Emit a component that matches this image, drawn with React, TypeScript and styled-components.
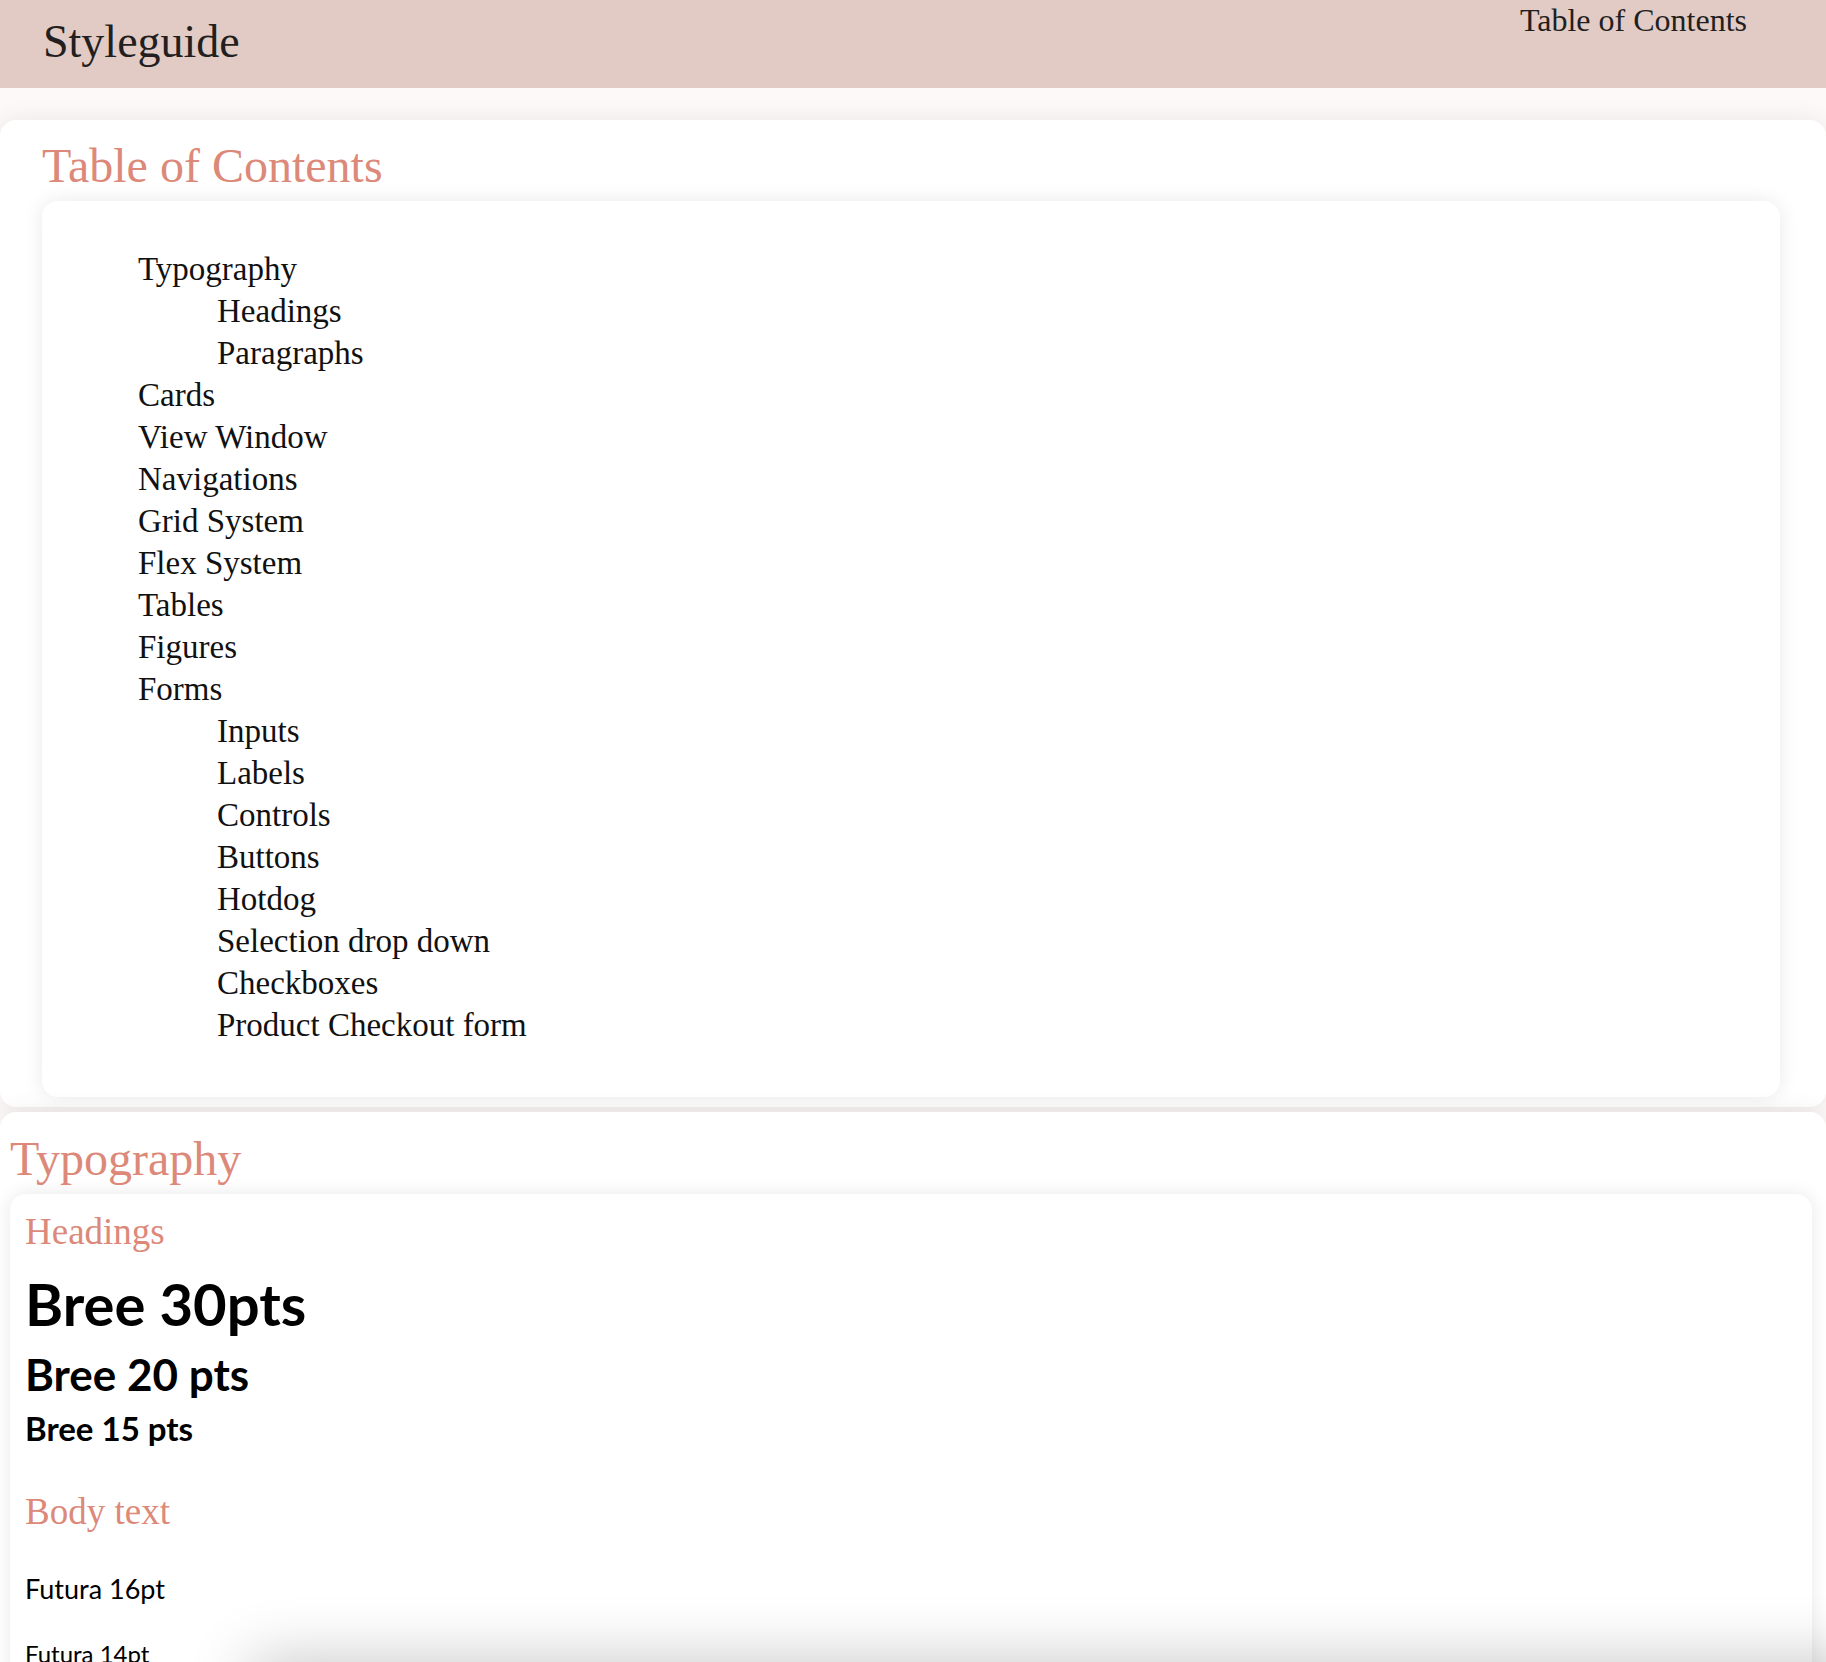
import React from 'react';
import styled, { createGlobalStyle } from 'styled-components';

const GlobalStyle = createGlobalStyle`
  html, body {
    margin: 0;
    padding: 0;
  }
  body {
    background: #fdf9f8;
    font-family: "Liberation Serif", "Times New Roman", serif;
    color: #111;
  }
  * {
    box-sizing: border-box;
  }
`;

const Header = styled.header`
  height: 88px;
  background: #e2cbc5;
  display: flex;
  justify-content: space-between;
  align-items: flex-start;
  padding: 0 79px 0 43px;
`;

const Brand = styled.h1`
  margin: 15px 0 0;
  font-size: 46px;
  font-weight: 400;
  line-height: normal;
  color: #231f20;
`;

const HeaderLink = styled.a`
  margin-top: 2px;
  font-size: 32px;
  line-height: normal;
  color: #231f20;
  text-decoration: none;
`;

const Main = styled.main`
  padding-top: 32px;
  display: flex;
  flex-direction: column;
  gap: 5px;
`;

const Section = styled.section<{ $inset: number; $top: number }>`
  background: #fff;
  border-radius: 16px;
  box-shadow: 0 0 24px rgba(0, 0, 0, 0.08);
  padding: ${(p) => p.$top}px ${(p) => p.$inset + 4}px 10px ${(p) => p.$inset}px;
`;

const SectionTitle = styled.h2`
  margin: 0 0 8px;
  font-size: 48px;
  font-weight: 400;
  line-height: normal;
  color: #dc897a;
`;

const Panel = styled.div<{ $pad: string }>`
  background: #fff;
  border-radius: 16px;
  box-shadow: 0 0 20px rgba(0, 0, 0, 0.09);
  padding: ${(p) => p.$pad};
`;

const TocList = styled.ul<{ $nested?: boolean }>`
  list-style: none;
  margin: 0;
  padding: 0 0 0 ${(p) => (p.$nested ? 79 : 0)}px;
`;

const TocItem = styled.li`
  font-size: 33px;
  line-height: 42px;
`;

const TocLink = styled.a`
  color: #111;
  text-decoration: none;
`;

const SubHeading = styled.h3<{ $gap: number }>`
  margin: ${(p) => p.$gap}px 0 0;
  font-size: 37px;
  font-weight: 400;
  line-height: normal;
  color: #dc897a;
`;

const BreeSample = styled.p<{ $size: number; $gap: number }>`
  margin: ${(p) => p.$gap}px 0 0;
  font-family: Lato, "Open Sans", sans-serif;
  font-weight: 700;
  font-size: ${(p) => p.$size}px;
  line-height: normal;
  color: #000;
`;

const FuturaSample = styled.p<{ $size: number; $gap: number }>`
  margin: ${(p) => p.$gap}px 0 0;
  font-family: Lato, "Open Sans", sans-serif;
  font-weight: 400;
  font-size: ${(p) => p.$size}px;
  line-height: normal;
  color: #000;
`;

const BottomShade = styled.div`
  position: fixed;
  left: 250px;
  right: -80px;
  bottom: -60px;
  height: 60px;
  box-shadow: 0 0 64px rgba(0, 0, 0, 0.24);
  pointer-events: none;
`;

type TocEntry = { label: string; children?: string[] };

const toc: TocEntry[] = [
  { label: 'Typography', children: ['Headings', 'Paragraphs'] },
  { label: 'Cards' },
  { label: 'View Window' },
  { label: 'Navigations' },
  { label: 'Grid System' },
  { label: 'Flex System' },
  { label: 'Tables' },
  { label: 'Figures' },
  {
    label: 'Forms',
    children: [
      'Inputs',
      'Labels',
      'Controls',
      'Buttons',
      'Hotdog',
      'Selection drop down',
      'Checkboxes',
      'Product Checkout form',
    ],
  },
];

const App: React.FC = () => {
  return (
    <>
      <GlobalStyle />
      <Header>
        <Brand>Styleguide</Brand>
        <HeaderLink href="#toc">Table of Contents</HeaderLink>
      </Header>

      <Main>
        <Section id="toc" $inset={42} $top={18}>
          <SectionTitle>Table of Contents</SectionTitle>
          <Panel $pad="47px 0 51px 96px">
            <TocList>
              {toc.map((entry) => (
                <TocItem key={entry.label}>
                  <TocLink href="#">{entry.label}</TocLink>
                  {entry.children && (
                    <TocList $nested>
                      {entry.children.map((child) => (
                        <TocItem key={child}>
                          <TocLink href="#">{child}</TocLink>
                        </TocItem>
                      ))}
                    </TocList>
                  )}
                </TocItem>
              ))}
            </TocList>
          </Panel>
        </Section>

        <Section $inset={10} $top={19}>
          <SectionTitle>Typography</SectionTitle>
          <Panel $pad="16px 15px 40px">
            <SubHeading $gap={0}>Headings</SubHeading>
            <BreeSample $size={58} $gap={16}>Bree 30pts</BreeSample>
            <BreeSample $size={44} $gap={10}>Bree 20 pts</BreeSample>
            <BreeSample $size={33} $gap={8}>Bree 15 pts</BreeSample>
            <SubHeading $gap={42}>Body text</SubHeading>
            <FuturaSample $size={27} $gap={39}>Futura 16pt</FuturaSample>
            <FuturaSample $size={24} $gap={34}>Futura 14pt</FuturaSample>
          </Panel>
        </Section>
      </Main>

      <BottomShade />
    </>
  );
};

export default App;
